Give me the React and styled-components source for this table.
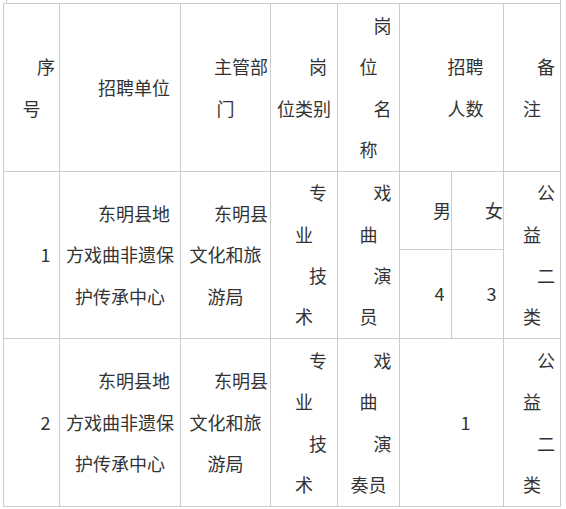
import React from "react";
import styled, { createGlobalStyle } from "styled-components";

const Global = createGlobalStyle`
  html, body { margin: 0; padding: 0; background: #fff; }
  body { font-family: "Noto Sans CJK SC", "Noto Sans", sans-serif; color: #333; }
`;

const Page = styled.div`
  padding: 0 0 0 3px;
`;

const Stub = styled.div`
  height: 3px;
  width: 553px;
  margin-left: 3px;
  border-left: 1px solid #cccccc;
  border-right: 1px solid #cccccc;
`;

const Sheet = styled.div`
  display: grid;
  width: max-content;
  grid-template-columns: 55px 120px 89px 66px 61px 51px 51px 56px;
  grid-template-rows: 167px 77px 88px 167px;
  gap: 1px;
  padding: 1px;
  background: #cccccc;
`;

const Cell = styled.div`
  grid-column: ${(p) => p.$col} / span ${(p) => p.$colSpan || 1};
  grid-row: ${(p) => p.$row} / span ${(p) => p.$rowSpan || 1};
  background: #fff;
  display: flex;
  flex-direction: column;
  justify-content: center;
  align-items: stretch;
  padding: 0 5px;
  min-width: 0;
  overflow: hidden;
`;

const Para = styled.p`
  margin: 0;
  font-size: 18px;
  line-height: 41.4px;
  text-align: center;
  text-indent: 28px;
  white-space: nowrap;
`;

const rows = [
  {
    no: "1",
    ensemble: [["戏", "曲"], ["演", "员"]],
    split: true,
  },
  {
    no: "2",
    ensemble: [["戏", "曲"], ["演", "奏员"]],
    split: false,
  },
];

const Lines = ({ lines }) =>
  lines.map((l, i) => (
    <React.Fragment key={i}>
      {i > 0 && <br />}
      {l}
    </React.Fragment>
  ));

const Paras = ({ paras }) =>
  paras.map((p, i) => (
    <Para key={i}>
      <Lines lines={p} />
    </Para>
  ));

export default function App() {
  return (
    <>
      <Global />
      <Page>
        <Stub />
        <Sheet>
          <Cell $col={1} $row={1}>
            <Paras paras={[["序", "号"]]} />
          </Cell>
          <Cell $col={2} $row={1}>
            <Paras paras={[["招聘单位"]]} />
          </Cell>
          <Cell $col={3} $row={1}>
            <Paras paras={[["主管部", "门"]]} />
          </Cell>
          <Cell $col={4} $row={1}>
            <Paras paras={[["岗", "位类别"]]} />
          </Cell>
          <Cell $col={5} $row={1}>
            <Paras paras={[["岗", "位"], ["名", "称"]]} />
          </Cell>
          <Cell $col={6} $colSpan={2} $row={1}>
            <Paras paras={[["招聘"], ["人数"]]} />
          </Cell>
          <Cell $col={8} $row={1}>
            <Paras paras={[["备", "注"]]} />
          </Cell>

          {rows.map((r, idx) => {
            const row = idx === 0 ? 2 : 4;
            const span = r.split ? 2 : 1;
            return (
              <React.Fragment key={r.no}>
                <Cell $col={1} $row={row} $rowSpan={span}>
                  <Paras paras={[[r.no]]} />
                </Cell>
                <Cell $col={2} $row={row} $rowSpan={span}>
                  <Paras paras={[["东明县地", "方戏曲非遗保", "护传承中心"]]} />
                </Cell>
                <Cell $col={3} $row={row} $rowSpan={span}>
                  <Paras paras={[["东明县", "文化和旅", "游局"]]} />
                </Cell>
                <Cell $col={4} $row={row} $rowSpan={span}>
                  <Paras paras={[["专", "业"], ["技", "术"]]} />
                </Cell>
                <Cell $col={5} $row={row} $rowSpan={span}>
                  <Paras paras={r.ensemble} />
                </Cell>
                {r.split ? (
                  <>
                    <Cell $col={6} $row={row}>
                      <Paras paras={[["男"]]} />
                    </Cell>
                    <Cell $col={7} $row={row}>
                      <Paras paras={[["女"]]} />
                    </Cell>
                    <Cell $col={6} $row={row + 1}>
                      <Paras paras={[["4"]]} />
                    </Cell>
                    <Cell $col={7} $row={row + 1}>
                      <Paras paras={[["3"]]} />
                    </Cell>
                  </>
                ) : (
                  <Cell $col={6} $colSpan={2} $row={row}>
                    <Paras paras={[["1"]]} />
                  </Cell>
                )}
                <Cell $col={8} $row={row} $rowSpan={span}>
                  <Paras paras={[["公", "益"], ["二", "类"]]} />
                </Cell>
              </React.Fragment>
            );
          })}
        </Sheet>
      </Page>
    </>
  );
}
